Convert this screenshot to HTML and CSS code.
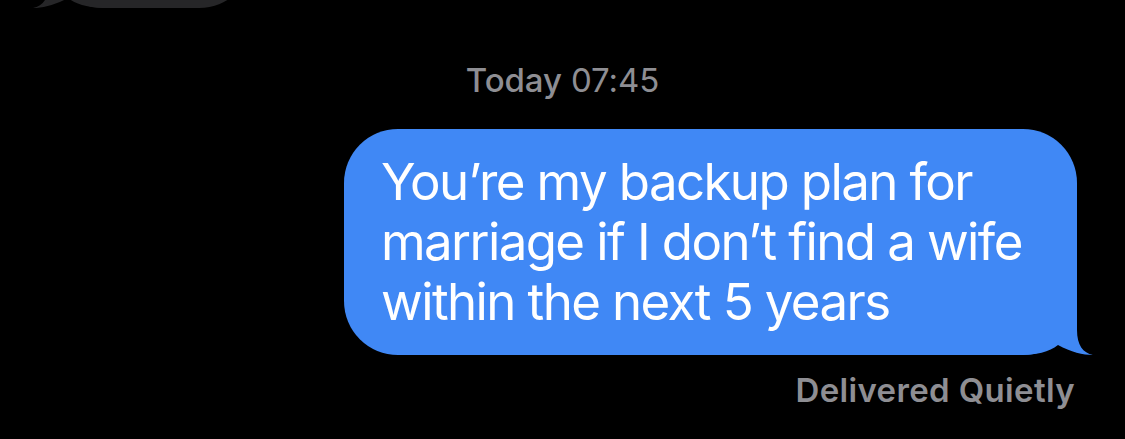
FILE: index.html
```html
<!DOCTYPE html>
<html lang="en">
<head>
<meta charset="utf-8">
<title>Messages</title>
<link rel="stylesheet" href="styles.css">
</head>
<body>
<main class="thread">
  <div class="bubble bubble-in">
    <svg class="tail tail-in" viewBox="-60 -70 76 70" aria-hidden="true"><path d="M-60 -70 L0 -70 L0 -25 C0 -10 6 -2 16 0 C6 0 -6 -3 -19 -10 C-28 -3 -40 0 -60 0 Z"/></svg>
  </div>
  <div class="stamp"><span class="stamp-day">Today</span> 07:45</div>
  <div class="bubble bubble-out">
    <p class="bubble-text">You’re my backup plan for<br>marriage if I don’t find a wife<br>within the next 5 years</p>
    <svg class="tail tail-out" viewBox="-60 -70 76 70" aria-hidden="true"><path d="M-60 -70 L0 -70 L0 -25 C0 -10 6 -2 16 0 C6 0 -6 -3 -19 -10 C-28 -3 -40 0 -60 0 Z"/></svg>
  </div>
  <div class="status">Delivered Quietly</div>
</main>
</body>
</html>
```
FILE: styles.css
```css
html, body {
  margin: 0;
  padding: 0;
  background: #000;
}
body {
  width: 1125px;
  height: 439px;
  overflow: hidden;
  font-family: Inter, "Noto Sans", "Liberation Sans", sans-serif;
}
.thread {
  display: flex;
  flex-direction: column;
}
.bubble {
  position: relative;
  border-radius: 54px;
}
.bubble-in {
  align-self: flex-start;
  width: 204px;
  height: 120px;
  margin: -112px 0 0 49px;
  background: #262628;
}
.bubble-in .tail { fill: #262628; }
.tail {
  position: absolute;
  bottom: 0;
  width: 76px;
  height: 70px;
  display: block;
}
.tail-out {
  right: -16px;
  fill: #4088f5;
}
.tail-in {
  left: -16px;
  transform: scaleX(-1);
}
.stamp {
  margin-top: 52px;
  text-align: center;
  font-size: 33px;
  line-height: 40px;
  color: #8e8e93;
  font-weight: 400;
  letter-spacing: -0.1px;
}
.stamp-day {
  font-weight: 500;
}
.bubble-out {
  align-self: flex-end;
  margin: 29px 48px 0 0;
  width: 733px;
  box-sizing: border-box;
  padding: 22.5px 20px 23.5px 37px;
  background: #4088f5;
}
.bubble-text {
  margin: 0;
  color: #fff;
  font-size: 51px;
  line-height: 60px;
  letter-spacing: -1.6px;
  white-space: nowrap;
  position: relative;
  z-index: 1;
}
.status {
  align-self: flex-end;
  margin: 15px 50px 0 0;
  font-size: 33px;
  line-height: 40px;
  font-weight: 600;
  letter-spacing: 0.35px;
  color: #8e8e93;
}
```
